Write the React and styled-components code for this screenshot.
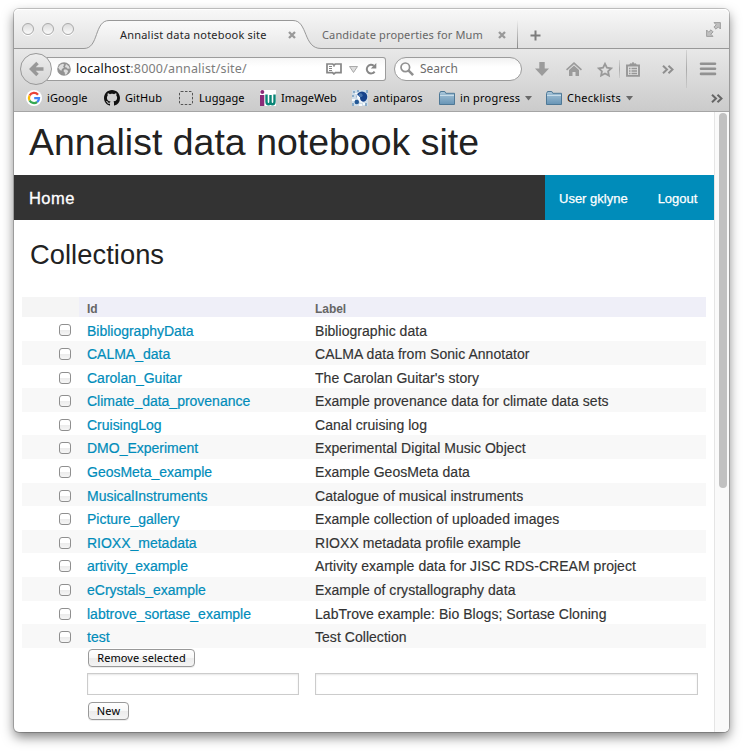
import React from 'react';
import styled, { createGlobalStyle, css } from 'styled-components';

const GlobalStyle = createGlobalStyle`
  *, *::before, *::after { box-sizing: border-box; }
  html, body { margin: 0; padding: 0; background: #fff; overflow: hidden; }
  button, input { font: inherit; }
`;

const uiFont = '"Noto Sans", "Open Sans", sans-serif';
const pageFont = '"Liberation Sans", Arial, sans-serif';

const Desktop = styled.div`
  width: 743px;
  height: 752px;
  padding: 9px 14px 0;
  background: #fff;
`;

const Window = styled.div`
  display: flex;
  flex-direction: column;
  width: 715px;
  height: 723px;
  border-radius: 5px;
  background: #fff;
  box-shadow: 0 0 0 1px rgba(0, 0, 0, 0.2), 0 5px 12px rgba(0, 0, 0, 0.5);
`;

/* ---------- Tab strip ---------- */

const TabStrip = styled.header`
  position: relative;
  display: flex;
  height: 40px;
  padding-left: 8px;
  border-radius: 5px 5px 0 0;
  background: linear-gradient(#f8f8f8, #e0e0e0);
  box-shadow: inset 0 1px 0 #fff;
  font: 11px/16px ${uiFont};
`;

const TabOutline = styled.svg`
  position: absolute;
  inset: 0;
  width: 715px;
  height: 40px;
`;

const WindowControls = styled.div`
  display: flex;
  gap: 8px;
  padding-top: 14px;
  width: 98px;
`;

const ControlDot = styled.span`
  width: 12px;
  height: 12px;
  border: 1px solid #a9a9a9;
  border-radius: 50%;
  background: linear-gradient(#dcdcdc, #fafafa);
  box-shadow: 0 1px 0 #fff;
`;

const Tab = styled.div`
  position: relative;
  display: flex;
  align-items: center;
  gap: ${p => (p.$active ? 21 : 15)}px;
  height: 34px;
  padding-top: 18px;
  padding-bottom: 1px;
  margin-left: ${p => (p.$active ? 0 : 26)}px;
  color: ${p => (p.$active ? '#262626' : '#666')};
  letter-spacing: ${p => (p.$active ? 0.2 : 0.15)}px;
  white-space: nowrap;
`;

const TabTitle = styled.span`
  width: ${p => p.$w}px;
`;

const Icon = styled.svg`
  flex: none;
  display: block;
  overflow: visible;
`;

const TabDivider = styled.span`
  position: relative;
  width: 1px;
  height: 29px;
  margin: 11px 12px 0 11px;
  background: linear-gradient(rgba(150, 150, 150, 0), #888);
`;

const NewTab = styled.span`
  position: relative;
  padding-top: 21px;
`;

const Fullscreen = styled.span`
  position: relative;
  margin-left: auto;
  padding: 13px 8px 0 0;
`;

/* ---------- Toolbars ---------- */

const Chrome = styled.div`
  height: 63px;
  background: linear-gradient(#e8e8e8, #cbcbcb);
  border-bottom: 1px solid #a5a5a5;
  font: 11px/16px ${uiFont};
  color: #000;
`;

const NavBar = styled.div`
  display: flex;
  height: 38px;
  padding: 4px 0 0 6px;
`;

const BackButton = styled.span`
  position: relative;
  flex: none;
  display: flex;
  align-items: center;
  justify-content: center;
  width: 32px;
  height: 32px;
  border: 1px solid #999;
  border-radius: 50%;
  background: linear-gradient(#ededed, #d5d5d5);
`;

const UrlField = styled.div`
  flex: none;
  display: flex;
  align-items: center;
  width: 339px;
  height: 24px;
  margin: 4px 0 0 -5px;
  padding-left: 10px;
  border: 1px solid #9c9c9c;
  border-left: 0;
  border-radius: 0 3px 3px 0;
  background: linear-gradient(#f6f6f6, #fff 40%);
  font-size: 12.5px;
  color: #7c7c7c;
`;

const UrlText = styled.span`
  width: 250px;
  margin-left: 5px;
  letter-spacing: 0.17px;
  white-space: nowrap;
`;

const UrlHost = styled.span`
  color: #111;
`;

const UrlIcons = styled.span`
  display: flex;
  align-items: center;
  gap: 7px;
`;

const SearchField = styled.div`
  flex: none;
  display: flex;
  align-items: center;
  gap: 6px;
  width: 128px;
  height: 24px;
  margin: 4px 0 0 8px;
  padding-left: 5px;
  border: 1px solid #9c9c9c;
  border-radius: 12px;
  background: linear-gradient(#f2f2f2, #fff 40%);
  font-size: 12px;
  color: #6c6c6c;
`;

const NavIcons = styled.div`
  flex: none;
  display: flex;
  align-items: center;
  height: 32px;
  margin-left: 12px;
`;

const NavSlot = styled.span`
  display: flex;
  justify-content: center;
  width: ${p => p.$w}px;
  padding-left: ${p => p.$inset ?? 0}px;
`;

const NavSeparator = styled.span`
  width: 1px;
  height: ${p => p.$h}px;
  background: linear-gradient(rgba(170, 170, 170, 0.3), #aaa, rgba(170, 170, 170, 0.3));
`;

const Bookmarks = styled.div`
  display: flex;
  align-items: center;
  height: 23px;
  padding: 0 6px 1px 12px;
`;

const Bookmark = styled.span`
  display: flex;
  align-items: center;
  gap: ${p => p.$gap ?? 5}px;
  width: ${p => p.$w}px;
  letter-spacing: ${p => p.$ls ?? 0.2}px;
  white-space: nowrap;
`;

const Overflow = styled.span`
  margin-left: auto;
`;

/* ---------- Page ---------- */

const Viewport = styled.div`
  display: flex;
  flex: 1;
  min-height: 0;
`;

const Page = styled.main`
  width: 700px;
  font-family: ${pageFont};
  color: #222;
`;

const SiteTitle = styled.h1`
  height: 63px;
  margin: 0;
  padding: 9px 0 0 15px;
  font-weight: 400;
  font-size: 37.4px;
  line-height: 43px;
  letter-spacing: 0.04px;
  white-space: nowrap;
`;

const TopBar = styled.nav`
  display: flex;
  justify-content: space-between;
  height: 45px;
  background: #333;
  color: #fff;
`;

const HomeLink = styled.a`
  padding-left: 15px;
  font-size: 16.5px;
  line-height: 46px;
  letter-spacing: 0.45px;
  -webkit-text-stroke: 0.3px #fff;
`;

const UserMenu = styled.div`
  display: flex;
  gap: 30px;
  width: 169px;
  padding-left: 14px;
  background: #008cba;
  font-size: 13px;
  line-height: 47px;
  -webkit-text-stroke: 0.25px #fff;
`;

const SectionTitle = styled.h2`
  height: 77px;
  margin: 0;
  padding: 18px 0 0 16px;
  font-weight: 400;
  font-size: 27.3px;
  line-height: 34px;
  letter-spacing: 0.05px;
`;

const Listing = styled.div`
  margin: 0 8px;
`;

const columns = css`
  display: grid;
  grid-template-columns: 57px 228px 399px;
  grid-template-rows: 100%;
`;

const HeadRow = styled.div`
  ${columns}
  height: 20px;
  background: #efeff8;
  font-weight: 700;
  font-size: 12px;
  line-height: 24px;
  color: #666;
`;

const HeadCell = styled.span`
  padding-left: 8px;
  letter-spacing: -0.06px;
  background: ${p => (p.$blank ? '#f5f5f5' : 'transparent')};
`;

const Row = styled.div`
  ${columns}
  height: ${p => (p.$first ? 24 : 23.6)}px;
  background: ${p => (p.$striped ? '#f8f8f8' : '#fff')};
  font-size: 14px;
  line-height: ${p => (p.$first ? 28 : 26.4)}px;
  color: #333;
`;

const CheckCell = styled.span`
  display: flex;
  justify-content: flex-end;
  padding: 7px 8px 0 0;
`;

const Checkbox = styled.input.attrs({ type: 'checkbox' })`
  appearance: none;
  width: 12px;
  height: 12px;
  margin: 0;
  border: 1px solid #8f8f8f;
  border-radius: 3px;
  background: linear-gradient(#fff 45%, #ececec 55%, #f6f6f6);
`;

const IdLink = styled.a`
  padding-left: 8px;
  letter-spacing: -0.01px;
  color: #008cba;
  -webkit-text-stroke: 0.2px #008cba;
`;

const Label = styled.span`
  padding-left: 8px;
  letter-spacing: 0.04px;
  -webkit-text-stroke: 0.15px #333;
`;

const Actions = styled.div`
  display: flex;
  height: ${p => p.$h}px;
  padding: ${p => p.$top}px 0 0 66px;
`;

const Button = styled.button`
  width: ${p => p.$w}px;
  height: 18px;
  padding: 0;
  border: 1px solid #999;
  border-radius: 4px;
  background: linear-gradient(#fff 0%, #f8f8f8 48%, #ececec 52%, #f4f4f4 100%);
  box-shadow: 0 1px 0 rgba(0, 0, 0, 0.07);
  font: 11px/15px ${uiFont};
  letter-spacing: 0.09px;
  color: #000;
`;

const FieldsRow = styled.div`
  ${columns}
  height: 29px;
  padding-top: 5px;
`;

const TextField = styled.input`
  grid-column: ${p => p.$col};
  width: ${p => p.$w}px;
  height: 22px;
  margin-left: 8px;
  border: 1px solid #ccc;
  background: #fff;
  box-shadow: inset 0 1px 2px rgba(0, 0, 0, 0.1);
`;

const ScrollTrack = styled.div`
  width: 15px;
  padding: 1px 0 0 4px;
  border-left: 1px solid #e5e5e5;
  border-radius: 0 0 5px 0;
  background: #fafafa;
`;

const ScrollThumb = styled.div`
  width: 8px;
  height: 375px;
  border-radius: 4px;
  background: #c1c1c1;
`;

/* ---------- Icons ---------- */

const CloseIcon = () => (
  <Icon width="8" height="8" viewBox="0 0 8 8">
    <path d="M1 1l6 6M7 1L1 7" stroke="#999" strokeWidth="2.3" />
  </Icon>
);

const PlusIcon = () => (
  <Icon width="11" height="11" viewBox="0 0 11 11">
    <path d="M5.5 .5v10M.5 5.5h10" stroke="#7c7c7c" strokeWidth="2" />
  </Icon>
);

const ExpandIcon = () => (
  <Icon width="15" height="15" viewBox="0 0 15 15" fill="#c0c0c0" stroke="#999" strokeWidth=".9">
    <path d="M8 .6h6.400V7l-2.100-2.100L10 7.200 7.900 5.100l2.300-2.300z" />
    <path d="M7 14.400H.6V8l2.100 2.100L5 7.800l2.100 2.100-2.300 2.300z" />
  </Icon>
);

const BackIcon = () => (
  <Icon width="15" height="16" viewBox="0 0 15 16">
    <path d="M8.500 2L2.500 8l6 6M2.500 8H14.500" fill="none" stroke="#989898" strokeWidth="3.500" />
  </Icon>
);

const GlobeIcon = () => (
  <Icon width="14" height="14" viewBox="0 0 14 14">
    <circle cx="7" cy="7" r="6.800" fill="#929292" />
    <path d="M1.200 5.500l2-2.800 2.800-1 1.300 1-1.200 1.600.8 1.400-2 1.300-.4 1.700-1.600-.7zM9 2l2.800 2.200 1 2.200-2.100.300-1.500-1.500-1.300.100zM7.600 7.300l2.400.5 1.200 1.400-1.600 3-1.600.5-.3-2.300-1.300-1.300z" fill="#dedede" />
  </Icon>
);

const ReaderIcon = () => (
  <Icon width="16" height="12" viewBox="0 0 16 12" fill="none" stroke="#858585">
    <path d="M8 11L6.500 9.700H1V1h5.700L8 2l1.300-1H15v8.700H9.500z" strokeWidth="1.700" />
    <path d="M8 2v2M3 3.500h3M3 5.500h3M3 7.500h3" />
  </Icon>
);

const HistoryIcon = () => (
  <Icon width="9" height="7" viewBox="0 0 9 7">
    <path d="M.5.500h8L4.500 6.500z" fill="#ddd" stroke="#aaa" />
  </Icon>
);

const ReloadIcon = () => (
  <Icon width="12" height="12" viewBox="0 0 12 12">
    <path d="M8.800 2.800A4.300 4.300 0 1 0 9.600 8.600" fill="none" stroke="#878787" strokeWidth="2" />
    <path d="M11.300 0v5.500H5.800z" fill="#878787" />
  </Icon>
);

const SearchIcon = () => (
  <Icon width="14" height="14" viewBox="0 0 14 14" fill="none" stroke="#909090">
    <circle cx="5.300" cy="5.300" r="4.300" strokeWidth="1.700" />
    <path d="M8.400 8.400l4.700 4.700" strokeWidth="2.500" />
  </Icon>
);

const DownloadIcon = () => (
  <Icon width="14" height="14" viewBox="0 0 14 14">
    <path d="M4.300 0h5.400v6.500H14L7 14 0 6.500h4.300z" fill="#9b9b9b" />
  </Icon>
);

const HomeIcon = () => (
  <Icon width="16" height="14" viewBox="0 0 16 14" fill="#9b9b9b">
    <path d="M8 0l8 7.300-1.100 1.100L8 2.200 1.100 8.400 0 7.300z" />
    <path d="M8 3.400l5 4.500V14H9.500v-4h-3v4H3V7.900z" />
  </Icon>
);

const StarIcon = () => (
  <Icon width="16" height="15" viewBox="0 0 16 15">
    <path d="M8 1.800l1.900 3.900 4.300.6-3.100 3 .8 4.300L8 11.500l-3.900 2.100.8-4.300-3.100-3 4.300-.6z" fill="none" stroke="#999" strokeWidth="1.800" />
  </Icon>
);

const ClipboardIcon = () => (
  <Icon width="14" height="15" viewBox="0 0 14 15" fill="none" stroke="#979797">
    <path d="M1 3.500h12v10.400H1z" strokeWidth="1.900" />
    <path d="M4 3V1.900h1.500L7 .5l1.500 1.400H10V3z" fill="#979797" />
    <path d="M3 6.500h1.500M3 9h1.500M3 11.500h1.500M5.500 6.500H11M5.500 9H11M5.500 11.500H11" strokeWidth="1.300" />
  </Icon>
);

const ChevronsIcon = ({ color = '#8f8f8f' }) => (
  <Icon width="12" height="9" viewBox="0 0 12 9">
    <path d="M1 .7l4 3.800-4 3.800M6.500.7l4 3.800-4 3.800" fill="none" stroke={color} strokeWidth="2" />
  </Icon>
);

const MenuIcon = () => (
  <Icon width="16" height="14" viewBox="0 0 16 14">
    <path d="M1 1.700h14M1 6.800h14M1 11.900h14" stroke="#929292" strokeWidth="2.600" strokeLinecap="round" />
  </Icon>
);

const GoogleIcon = () => (
  <Icon width="16" height="16" viewBox="0 0 16 16" fill="none" strokeWidth="2.300">
    <circle cx="8" cy="8" r="8" fill="#fff" />
    <path d="M12 4.800A5 5 0 0 0 3.600 5.600" stroke="#ea4335" />
    <path d="M3.600 5.600a5 5 0 0 0 0 4.900" stroke="#fbbc05" />
    <path d="M3.600 10.500a5 5 0 0 0 7.500 1.500" stroke="#34a853" />
    <path d="M11.100 12A5 5 0 0 0 13 8.200H8.200" stroke="#4285f4" />
  </Icon>
);

const GitHubIcon = () => (
  <Icon width="16" height="16" viewBox="0 0 16 16">
    <path fill="#111" d="M8 0C3.580 0 0 3.580 0 8c0 3.540 2.290 6.530 5.470 7.590.4.070.55-.17.55-.38 0-.19-.01-.82-.01-1.490-2.010.37-2.530-.49-2.690-.94-.09-.23-.48-.94-.82-1.130-.28-.15-.68-.52-.01-.53.63-.01 1.080.58 1.230.82.72 1.210 1.870.87 2.330.66.07-.52.28-.87.51-1.070-1.780-.2-3.640-.89-3.640-3.950 0-.87.31-1.590.82-2.150-.08-.2-.36-1.020.08-2.120 0 0 .67-.21 2.200.82.64-.18 1.320-.27 2-.27s1.360.09 2 .27c1.530-1.040 2.200-.82 2.200-.82.44 1.100.16 1.920.08 2.120.51.56.82 1.270.82 2.150 0 3.070-1.870 3.750-3.650 3.950.29.25.54.73.54 1.480 0 1.070-.01 1.930-.01 2.200 0 .21.15.46.55.38A8.010 8.010 0 0 0 16 8c0-4.420-3.580-8-8-8z" />
  </Icon>
);

const PlaceholderIcon = () => (
  <Icon width="14" height="14" viewBox="0 0 14 14">
    <rect x=".5" y=".5" width="13" height="13" rx="1.500" fill="none" stroke="#555" strokeDasharray="2.500 1.500" />
  </Icon>
);

const ImageWebIcon = () => (
  <Icon width="16" height="16" viewBox="0 0 16 16">
    <path d="M0 0h16v16H0z" fill="#fff" />
    <circle cx="2.300" cy="1.900" r="2" fill="#8a2b78" />
    <path d="M0 5h4.300v11H0z" fill="#8a2b78" />
    <path d="M6.500 4.500v7q0 2.700 2 2.700t2-2.700V5v6.500q0 2.700 2 2.700t2-2.700v-7" fill="none" stroke="#098576" strokeWidth="2.400" />
  </Icon>
);

const AntiparosIcon = () => (
  <Icon width="16" height="16" viewBox="0 0 16 16">
    <path d="M0 0h16v16H0z" fill="#cfdde9" />
    <path d="M1 1h2v2H1zM5 0h2v2H5zM0 5h2v2H0zM14 0h2v3h-2zM0 13h2v3H0zM13 13h2v3h-2z" fill="#8aacc9" />
    <path d="M3 3h2v1H3zM0 9h3v2H0zM7 14h3v2H7zM11 13h2v2h-2z" fill="#f6fafc" />
    <circle cx="10" cy="6.800" r="5.300" fill="#15428c" />
    <path d="M5.300 4.500q-1.800 5.700 3.200 8 2.300.6 3.700-.6-4.500-.4-4.200-5z" fill="#f2f7fb" />
    <circle cx="8.600" cy="5.200" r="2" fill="#4472ab" />
    <circle cx="4.800" cy="12" r="2.300" fill="#245895" />
  </Icon>
);

const FolderIcon = () => (
  <Icon width="16" height="14" viewBox="0 0 16 14">
    <defs>
      <linearGradient id="folder" x2="0" y2="1">
        <stop stopColor="#a9c6da" />
        <stop offset="1" stopColor="#6794b5" />
      </linearGradient>
    </defs>
    <path d="M.5 13.500v-11L1.500.5h4.300l1 1.800h8.700v11.200z" fill="url(#folder)" stroke="#4e7896" />
    <path d="M1 4.500h14" stroke="#c7dce9" />
  </Icon>
);

const MenuArrow = () => (
  <Icon width="7" height="4.5" viewBox="0 0 8 5">
    <path d="M0 0h8L4 5z" fill="#696969" />
  </Icon>
);

const collections = [
  ['BibliographyData', 'Bibliographic data'],
  ['CALMA_data', 'CALMA data from Sonic Annotator'],
  ['Carolan_Guitar', "The Carolan Guitar's story"],
  ['Climate_data_provenance', 'Example provenance data for climate data sets'],
  ['CruisingLog', 'Canal cruising log'],
  ['DMO_Experiment', 'Experimental Digital Music Object'],
  ['GeosMeta_example', 'Example GeosMeta data'],
  ['MusicalInstruments', 'Catalogue of musical instruments'],
  ['Picture_gallery', 'Example collection of uploaded images'],
  ['RIOXX_metadata', 'RIOXX metadata profile example'],
  ['artivity_example', 'Artivity example data for JISC RDS-CREAM project'],
  ['eCrystals_example', 'Example of crystallography data'],
  ['labtrove_sortase_example', 'LabTrove example: Bio Blogs; Sortase Cloning'],
  ['test', 'Test Collection'],
];

export default function App() {
  return (
    <Desktop>
      <GlobalStyle />
      <Window>
        <TabStrip>
          <TabOutline viewBox="0 0 715 40">
            <defs>
              <linearGradient id="tab" x2="0" y2="1">
                <stop stopColor="#fafafa" />
                <stop offset="1" stopColor="#e8e8e8" />
              </linearGradient>
            </defs>
            <path d="M70 39.500C85 39.500 80 11.500 95 11.500H279C294 11.500 289 39.500 307 39.500V40H70z" fill="url(#tab)" />
            <path d="M0 39.500H70C85 39.500 80 11.500 95 11.500H279C294 11.500 289 39.500 307 39.500H715" fill="none" stroke="#989898" />
          </TabOutline>
          <WindowControls>
            <ControlDot />
            <ControlDot />
            <ControlDot />
          </WindowControls>
          <Tab $active>
            <TabTitle $w={147}>Annalist data notebook site</TabTitle>
            <CloseIcon />
          </Tab>
          <Tab>
            <TabTitle $w={161}>Candidate properties for Mum</TabTitle>
            <CloseIcon />
          </Tab>
          <TabDivider />
          <NewTab><PlusIcon /></NewTab>
          <Fullscreen><ExpandIcon /></Fullscreen>
        </TabStrip>

        <Chrome>
          <NavBar>
            <BackButton><BackIcon /></BackButton>
            <UrlField>
              <GlobeIcon />
              <UrlText><UrlHost>localhost</UrlHost>:8000/annalist/site/</UrlText>
              <UrlIcons>
                <ReaderIcon />
                <HistoryIcon />
                <ReloadIcon />
              </UrlIcons>
            </UrlField>
            <SearchField>
              <SearchIcon />
              Search
            </SearchField>
            <NavIcons>
              <NavSlot $w={16}><DownloadIcon /></NavSlot>
              <NavSlot $w={48}><HomeIcon /></NavSlot>
              <NavSlot $w={14}><StarIcon /></NavSlot>
              <NavSlot $w={14}><NavSeparator $h={18} /></NavSlot>
              <NavSlot $w={14}><ClipboardIcon /></NavSlot>
              <NavSlot $w={46} $inset={10}><ChevronsIcon /></NavSlot>
              <NavSeparator $h={38} />
              <NavSlot $w={42}><MenuIcon /></NavSlot>
            </NavIcons>
          </NavBar>
          <Bookmarks>
            <Bookmark $w={78} $ls={0.1}><GoogleIcon />iGoogle</Bookmark>
            <Bookmark $w={75} $ls={0.1}><GitHubIcon />GitHub</Bookmark>
            <Bookmark $w={81} $ls={0.05} $gap={6}><PlaceholderIcon />Luggage</Bookmark>
            <Bookmark $w={92} $ls={-0.05}><ImageWebIcon />ImageWeb</Bookmark>
            <Bookmark $w={87} $ls={0.06}><AntiparosIcon />antiparos</Bookmark>
            <Bookmark $w={107}><FolderIcon />in progress<MenuArrow /></Bookmark>
            <Bookmark $w={95} $ls={0.27}><FolderIcon />Checklists<MenuArrow /></Bookmark>
            <Overflow><ChevronsIcon color="#666" /></Overflow>
          </Bookmarks>
        </Chrome>

        <Viewport>
          <Page>
            <SiteTitle>Annalist data notebook site</SiteTitle>
            <TopBar>
              <HomeLink>Home</HomeLink>
              <UserMenu>
                <span>User gklyne</span>
                <span>Logout</span>
              </UserMenu>
            </TopBar>
            <SectionTitle>Collections</SectionTitle>
            <Listing>
              <HeadRow>
                <HeadCell $blank />
                <HeadCell>Id</HeadCell>
                <HeadCell>Label</HeadCell>
              </HeadRow>
              {collections.map(([id, label], i) => (
                <Row key={id} $first={i === 0} $striped={i % 2 === 1}>
                  <CheckCell><Checkbox aria-label={id} /></CheckCell>
                  <IdLink>{id}</IdLink>
                  <Label>{label}</Label>
                </Row>
              ))}
              <Actions $h={20} $top={1.2}><Button $w={107}>Remove selected</Button></Actions>
              <FieldsRow>
                <TextField $col={2} $w={212} aria-label="Id" />
                <TextField $col={3} $w={383} aria-label="Label" />
              </FieldsRow>
              <Actions $h={24} $top={5.2}><Button $w={41}>New</Button></Actions>
            </Listing>
          </Page>
          <ScrollTrack><ScrollThumb /></ScrollTrack>
        </Viewport>
      </Window>
    </Desktop>
  );
}
